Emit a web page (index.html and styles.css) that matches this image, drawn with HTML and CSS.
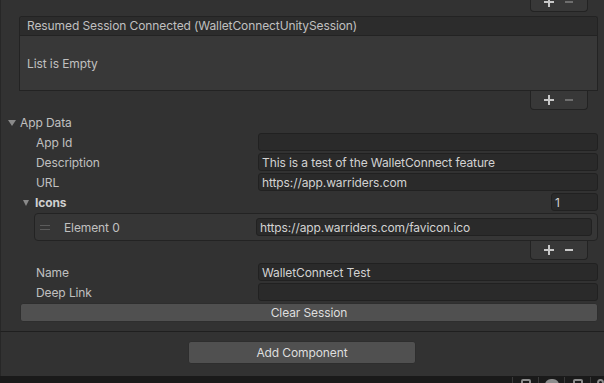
FILE: index.html
```html
<!DOCTYPE html>
<html>
<head>
<meta charset="utf-8">
<link rel="stylesheet" href="styles.css">
</head>
<body>
<div class="inspector">
  <div class="list-footer top-footer">
    <span class="ico plus"></span><span class="ico minus dim"></span>
  </div>
  <div class="list">
    <div class="list-header">Resumed Session Connected (WalletConnectUnitySession)</div>
    <div class="list-body">List is Empty</div>
  </div>
  <div class="list-footer">
    <span class="ico plus"></span><span class="ico minus dim"></span>
  </div>

  <div class="foldout"><span class="tri"></span><span>App Data</span></div>
  <div class="prop"><span class="label">App Id</span><span class="field"></span></div>
  <div class="prop"><span class="label">Description</span><span class="field">This is a test of the WalletConnect feature</span></div>
  <div class="prop"><span class="label">URL</span><span class="field">https://app.warriders.com</span></div>
  <div class="prop icons-row"><span class="tri small"></span><span class="label bold">Icons</span><span class="field count">1</span></div>
  <div class="element-box">
    <span class="handle"></span>
    <span class="label">Element 0</span>
    <span class="field elem">https://app.warriders.com/favicon.ico</span>
  </div>
  <div class="list-footer">
    <span class="ico plus"></span><span class="ico minus"></span>
  </div>
  <div class="prop name-row"><span class="label">Name</span><span class="field">WalletConnect Test</span></div>
  <div class="prop"><span class="label">Deep Link</span><span class="field"></span></div>
  <div class="btn clear">Clear Session</div>
</div>
<div class="add-area">
  <div class="btn add">Add Component</div>
</div>
<div class="statusbar">
  <span class="sep"></span>
  <span class="sb-icon i1"></span>
  <span class="sep"></span>
  <span class="sb-icon i2"></span>
  <span class="sep"></span>
  <span class="sb-icon i3"></span>
  <span class="sep"></span>
  <span class="sb-icon i4"></span>
</div>
</body>
</html>
```
FILE: styles.css
```css
html, body {
  margin: 0;
  padding: 0;
}
body {
  width: 604px;
  height: 383px;
  overflow: hidden;
  background: #323232;
  font-family: Inter, "Noto Sans", sans-serif;
  font-size: 12px;
  letter-spacing: -0.1px;
  color: #c0c0c0;
}
.inspector {
  height: 332px;
  box-sizing: border-box;
  border-left: 1px solid #272727;
  border-bottom: 1px solid #1f1f1f;
  padding-right: 6px;
  display: flex;
  flex-direction: column;
}
.list-footer {
  align-self: flex-end;
  margin-right: 10px;
  width: 56px;
  height: 18px;
  box-sizing: content-box;
  border: 1px solid #232323;
  border-top: none;
  border-radius: 0 0 4px 4px;
  background: #383838;
  display: flex;
  align-items: center;
  justify-content: center;
  gap: 10px;
  flex-shrink: 0;
}
.top-footer {
  margin-top: -7px;
}
.ico {
  display: block;
  position: relative;
  width: 10px;
  height: 10px;
}
.plus::before, .plus::after, .minus::before {
  content: "";
  position: absolute;
  background: #c8c8c8;
}
.plus::before {
  left: 0;
  top: 4px;
  width: 10px;
  height: 2px;
}
.plus::after {
  left: 4px;
  top: 0;
  width: 2px;
  height: 10px;
}
.minus::before {
  left: 1px;
  top: 4px;
  width: 8px;
  height: 2px;
}
.minus.dim::before {
  background: #6e6e6e;
}
.list {
  margin-top: 4px;
  margin-left: 18px;
  border: 1px solid #232323;
  border-bottom: none;
  border-radius: 3px 3px 0 0;
  flex-shrink: 0;
}
.list-header {
  height: 18px;
  line-height: 18px;
  padding-left: 7px;
  background: #2c2c2c;
  border-bottom: 1px solid #232323;
  border-radius: 3px 3px 0 0;
}
.list-body {
  height: 54px;
  line-height: 56px;
  padding-left: 7px;
  background: #383838;
  border-bottom: 1px solid #232323;
}
.foldout {
  margin-top: 3px;
  height: 18px;
  display: flex;
  align-items: center;
  padding-left: 7px;
  flex-shrink: 0;
}
.tri {
  width: 0;
  height: 0;
  border-left: 4px solid transparent;
  border-right: 4px solid transparent;
  border-top: 6px solid #8a8a8a;
  margin-right: 4px;
  margin-top: 1px;
}
.tri.small {
  border-left-width: 3.5px;
  border-right-width: 3.5px;
  margin-right: 6px;
}
.prop {
  margin-top: 2px;
  height: 18px;
  display: flex;
  align-items: center;
  padding-left: 35px;
  flex-shrink: 0;
}
.icons-row {
  padding-left: 22px;
}
.name-row {
  margin-top: 3px;
}
.label {
  flex: 1;
  white-space: nowrap;
  padding-top: 1px;
}
.bold {
  font-weight: 700;
  color: #cfcfcf;
}
.field {
  width: 340px;
  height: 18px;
  box-sizing: border-box;
  background: #2a2a2a;
  border: 1px solid #212121;
  border-radius: 3px;
  padding-left: 3px;
  line-height: 17px;
  color: #d2d2d2;
  white-space: nowrap;
  overflow: hidden;
}
.field.count {
  width: 47px;
}
.element-box {
  margin-top: 2px;
  margin-left: 33px;
  height: 28px;
  box-sizing: border-box;
  border: 1px solid #232323;
  border-radius: 4px;
  background: #363636;
  display: flex;
  align-items: center;
  padding-left: 5px;
  padding-right: 5px;
  flex-shrink: 0;
}
.handle {
  width: 10px;
  height: 5px;
  border-top: 1px solid #5c5c5c;
  border-bottom: 1px solid #5c5c5c;
  box-sizing: border-box;
  margin-right: 14px;
  margin-top: 1px;
}
.field.elem {
  width: 336px;
}
.btn {
  height: 19px;
  box-sizing: border-box;
  background: #505050;
  border: 1px solid #2e2e2e;
  border-radius: 3px;
  color: #dedede;
  text-align: center;
  line-height: 17px;
  flex-shrink: 0;
}
.clear {
  margin-top: 2px;
  margin-left: 19px;
}
.add-area {
  height: 44px;
  box-sizing: border-box;
  border-left: 1px solid #272727;
  padding-top: 9px;
  display: flex;
  justify-content: center;
}
.add {
  width: 228px;
  height: 23px;
  line-height: 21px;
  margin-left: -1px;
}
.statusbar {
  height: 7px;
  background: #1a1a1a;
  display: flex;
  justify-content: flex-end;
  align-items: stretch;
  overflow: hidden;
}
.sep {
  width: 1px;
  background: #3a3a3a;
  margin-top: 1px;
}
.sb-icon {
  width: 25px;
  display: flex;
  justify-content: center;
}
.sb-icon::before {
  content: "";
  display: block;
  margin-top: 3px;
  width: 10px;
  height: 8px;
  border: 2px solid #8c8c8c;
  box-sizing: border-box;
  border-radius: 2px;
}
.i2::before {
  width: 14px;
  border-radius: 6px 6px 0 0;
  background: #8c8c8c;
}
.i4 {
  width: 13px;
}
.i4::before {
  border-radius: 50%;
  margin-left: 6px;
}
```
